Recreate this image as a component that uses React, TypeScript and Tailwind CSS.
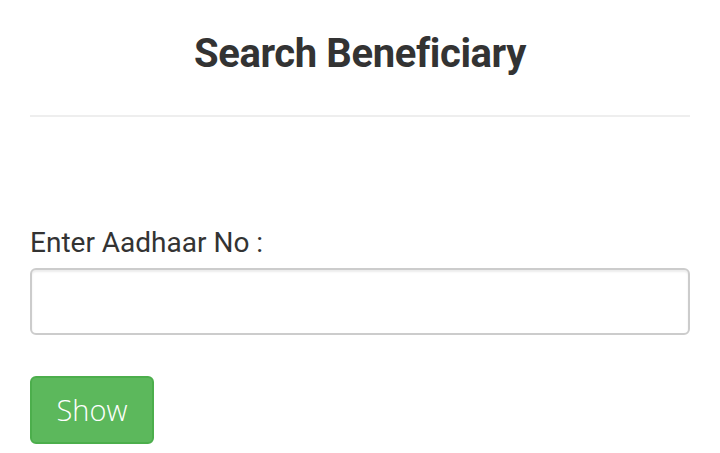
export default function App() {
  return (
    <main className="min-h-screen bg-white px-[30px] text-[#333]" style={{ fontFamily: "Roboto, 'Liberation Sans', sans-serif" }}>
      <h1 className="pt-[29px] text-center text-[40px] font-bold leading-[50px] tracking-[-0.4px]">
        Search Beneficiary
      </h1>

      <hr className="mt-[36px] border-t-2 border-[#eee]" />

      <div className="mt-[108px]">
        <label className="block text-[28px] leading-[36px]">Enter Aadhaar No :</label>
        <input
          type="text"
          className="mt-[7px] block h-[67px] w-full rounded-[6px] border-2 border-[#ccc] bg-white px-4 text-[26px] shadow-[inset_0_2px_2px_rgba(0,0,0,0.075)] outline-none"
        />
      </div>

      <button
        className="mt-[41px] h-[68px] w-[124px] rounded-[6px] border-2 border-[#4cae4c] bg-[#5cb85c] text-[29px] font-light text-white"
        style={{ fontFamily: "'Open Sans', Lato, sans-serif" }}
      >
        Show
      </button>
    </main>
  )
}
